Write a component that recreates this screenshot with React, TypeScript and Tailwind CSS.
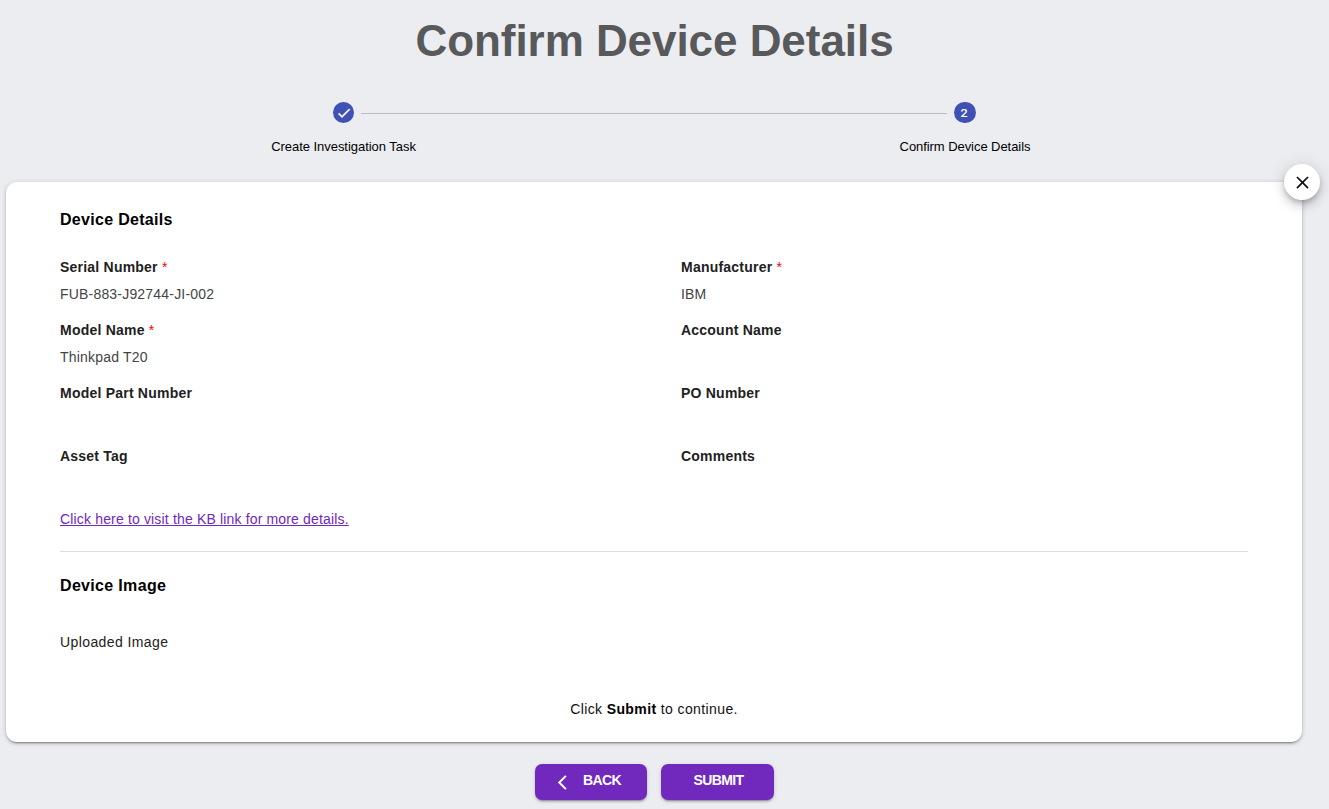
import React from "react";

type FieldProps = { label: string; value?: string; required?: boolean };

const fields: FieldProps[] = [
  { label: "Serial Number", value: "FUB-883-J92744-JI-002", required: true },
  { label: "Manufacturer", value: "IBM", required: true },
  { label: "Model Name", value: "Thinkpad T20", required: true },
  { label: "Account Name" },
  { label: "Model Part Number" },
  { label: "PO Number" },
  { label: "Asset Tag" },
  { label: "Comments" },
];

function Field({ label, value, required }: FieldProps) {
  return (
    <div className="h-[63px] text-sm tracking-[0.22px]">
      <div className="h-[27px] leading-[27px] font-bold text-[#212121]">
        {label}
        {required && <span className="font-normal text-[#ff0000]"> *</span>}
      </div>
      <div className="h-[27px] leading-[27px] tracking-[0.19px] text-[#444444]">{value}</div>
    </div>
  );
}

export default function App() {
  return (
    <div className="h-[809px] w-full overflow-hidden bg-[#ecedf1] font-['Liberation_Sans',Arial,sans-serif] text-black">
      <div className="flex h-full w-[1309px] flex-col">
        <h1 className="mt-[15px] h-[52px] text-center text-[44px] leading-[52px] font-bold tracking-[-0.05px] text-[#58595b]">
          Confirm Device Details
        </h1>

        <div className="mt-[34px] ml-[33px] flex w-[1243px] items-start">
          <div className="flex w-[621px] flex-col items-center">
            <div className="mt-px flex h-[21px] w-[21px] items-center justify-center rounded-full bg-[#3f51b5]">
              <svg className="h-[16px] w-[16px]" viewBox="0 0 24 24" fill="#fff" stroke="#fff" strokeWidth="0.6">
                <path d="M9 16.2L4.8 12l-1.4 1.4L9 19 21 7l-1.4-1.4L9 16.2z" />
              </svg>
            </div>
            <span className="mt-[14px] text-[13px] leading-5 tracking-[-0.04px]">Create Investigation Task</span>
          </div>
          <div className="-mx-[293px] mt-3 h-px w-[586px] shrink-0 bg-[#bdbdbd]" />
          <div className="flex w-[621px] flex-col items-center">
            <div className="mt-px flex h-[21px] w-[22px] items-center justify-center rounded-full bg-[#3f51b5] text-[11px] leading-none font-medium text-white">
              <span className="scale-x-115 pt-px font-[Roboto,sans-serif]">2</span>
            </div>
            <span className="mt-[14px] pl-px text-[13px] leading-5 tracking-[-0.06px]">Confirm Device Details</span>
          </div>
        </div>

        <main className="relative mt-[25px] ml-1.5 h-[560px] w-[1296px] shrink-0 rounded-[11px] bg-white px-[54px] pt-[26px] shadow-[0_3px_1px_-2px_rgba(0,0,0,0.2),0_2px_2px_0_rgba(0,0,0,0.14),0_1px_5px_0_rgba(0,0,0,0.2)]">
          <button
            aria-label="Close"
            className="absolute -top-[18px] -right-[18px] flex h-9 w-9 items-center justify-center rounded-full bg-white shadow-[0_3px_5px_-1px_rgba(0,0,0,0.2),0_6px_10px_0_rgba(0,0,0,0.14),0_1px_18px_0_rgba(0,0,0,0.12)]"
          >
            <svg className="h-[21px] w-[21px]" viewBox="0 0 24 24" fill="#111">
              <path d="M19 6.41L17.59 5 12 10.59 6.41 5 5 6.41 10.59 12 5 17.59 6.41 19 12 13.41 17.59 19 19 17.59 13.41 12z" />
            </svg>
          </button>
          <h2 className="h-6 text-base leading-6 font-bold tracking-[0.3px]">Device Details</h2>
          <div className="mt-[22px] grid grid-cols-[621px_1fr]">
            {fields.map((f) => (
              <Field key={f.label} {...f} />
            ))}
          </div>
          <a href="#" className="block h-[27px] text-sm leading-[27px] tracking-[0.16px] text-[#7128bd] underline">
            Click here to visit the KB link for more details.
          </a>
          <hr className="mt-[18px] border-t border-[#dddddd]" />
          <h2 className="mt-[22px] h-6 text-base leading-6 font-bold tracking-[0.33px]">Device Image</h2>
          <p className="mt-[32px] h-6 text-sm leading-6 tracking-[0.4px] text-[#212121]">Uploaded Image</p>
          <p className="mt-[43px] h-6 text-center text-sm leading-6 tracking-[0.39px] text-[#111111]">
            Click <b className="text-black">Submit</b> to continue.
          </p>
        </main>

        <div className="mt-[22px] ml-[535px] flex gap-3.5 text-sm font-bold tracking-[-0.65px] text-white">
          <button className="flex h-9 w-28 items-center rounded-[7px] bg-[#7128bd] pb-[4px] pl-4 shadow-[0_3px_1px_-2px_rgba(0,0,0,0.2),0_2px_2px_0_rgba(0,0,0,0.14),0_1px_5px_0_rgba(0,0,0,0.12)]">
            <svg className="mt-[4px] mr-[11px] h-[21px] w-[21px]" viewBox="0 0 24 24" fill="none" stroke="white" strokeWidth="2.3">
              <path d="M17 4.4L9.4 12l7.6 7.6" />
            </svg>
            BACK
          </button>
          <button className="h-9 w-[113px] rounded-[7px] bg-[#7128bd] pb-[5px] pl-2 shadow-[0_3px_1px_-2px_rgba(0,0,0,0.2),0_2px_2px_0_rgba(0,0,0,0.14),0_1px_5px_0_rgba(0,0,0,0.12)]">
            <span className="pr-1.5">SUBMIT</span>
          </button>
        </div>
      </div>
    </div>
  );
}
